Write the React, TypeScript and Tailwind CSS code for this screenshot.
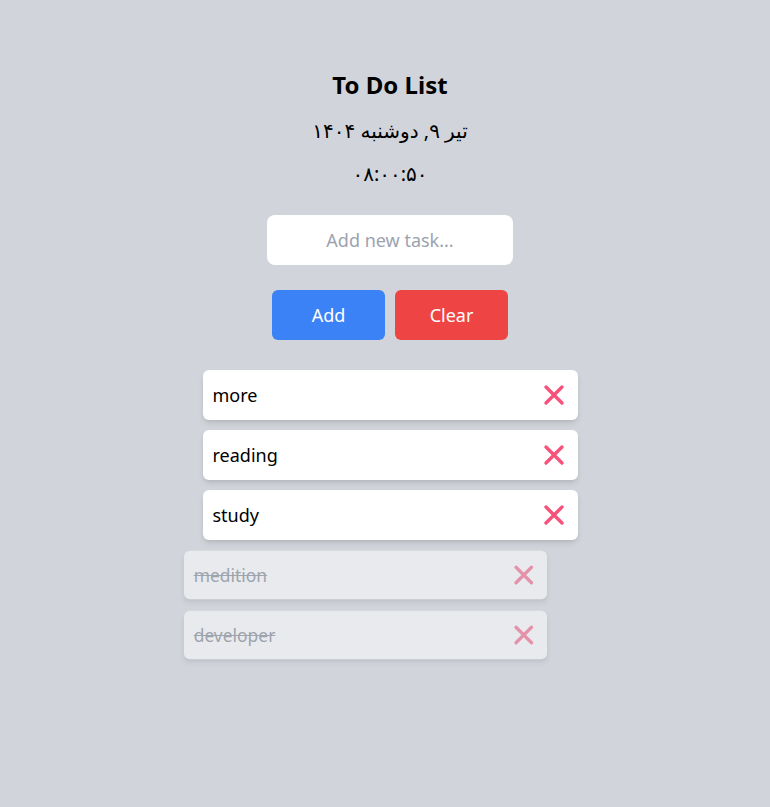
const tasks = [
  { text: "more", done: false },
  { text: "reading", done: false },
  { text: "study", done: false },
  { text: "medition", done: true },
  { text: "developer", done: true },
]

function XIcon() {
  return (
    <svg width="22" height="22" viewBox="0 0 22 22" fill="none">
      <path d="M3 3L19 19M19 3L3 19" stroke="#f7527b" strokeWidth="3.4" strokeLinecap="round" />
    </svg>
  )
}

export default function App() {
  return (
    <div className="min-h-[807px] bg-[#d1d5db] font-['Noto_Sans','DejaVu_Sans',sans-serif] text-black">
      <div className="flex flex-col items-center pl-[10px] pt-[69px]">
        <h1 className="text-2xl font-bold leading-8">To Do List</h1>
        <p className="mt-[14px] text-xl leading-8" dir="rtl">تیر ۹, دوشنبه ۱۴۰۴</p>
        <p className="mt-[11px] text-xl leading-8">۰۸:۰۰:۵۰</p>
        <input
          placeholder="Add new task..."
          className="mt-[25px] h-[50px] w-[246px] rounded-lg bg-white text-center text-lg outline-none placeholder:text-[#9ca3af]"
        />
        <div className="mt-[25px] flex gap-[10px]">
          <button className="h-[50px] w-[113px] rounded-md bg-[#3b82f6] text-lg text-white">Add</button>
          <button className="h-[50px] w-[113px] rounded-md bg-[#ef4444] text-lg text-white">Clear</button>
        </div>
        <ul className="mt-[30px] flex flex-col gap-[10px]">
          {tasks.map((t) => (
            <li
              key={t.text}
              className={
                t.done
                  ? "flex h-[50px] w-[375px] -translate-x-[25px] scale-[0.968] items-center justify-between rounded-md bg-white pl-[10px] pr-[13px] opacity-50 shadow-md"
                  : "flex h-[50px] w-[375px] items-center justify-between rounded-md bg-white pl-[10px] pr-[13px] shadow-md"
              }
            >
              <span className={t.done ? "text-lg text-[#6b7280] line-through" : "text-lg"}>{t.text}</span>
              <XIcon />
            </li>
          ))}
        </ul>
      </div>
    </div>
  )
}
